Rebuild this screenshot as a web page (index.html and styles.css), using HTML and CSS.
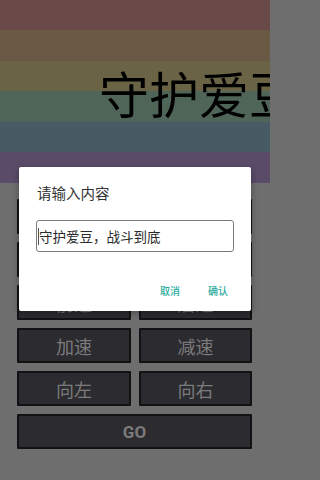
FILE: index.html
```html
<!DOCTYPE html>
<html lang="zh-CN">
<head>
<meta charset="utf-8">
<title>守护爱豆</title>
<link rel="stylesheet" href="styles.css">
</head>
<body>
<div class="app">
  <header class="banner">
    <div class="banner-title">守护爱豆</div>
  </header>
  <main class="pad">
    <button class="key">开始</button>
    <button class="key">暂停</button>
    <button class="key">上升</button>
    <button class="key">下降</button>
    <button class="key">前进</button>
    <button class="key">后退</button>
    <button class="key">加速</button>
    <button class="key">减速</button>
    <button class="key">向左</button>
    <button class="key">向右</button>
    <button class="key key-wide">GO</button>
  </main>
  <div class="dialog">
    <div class="dialog-title">请输入内容</div>
    <div class="dialog-input"><span class="caret"></span>守护爱豆，战斗到底</div>
    <div class="dialog-actions">
      <span class="action">取消</span>
      <span class="action">确认</span>
    </div>
  </div>
</div>
</body>
</html>
```
FILE: styles.css
```css
* { box-sizing: border-box; }
html, body { margin: 0; padding: 0; }
body {
  width: 270px;
  height: 480px;
  overflow: hidden;
  background: #6e6e6e;
  font-family: "Noto Sans CJK SC", "Noto Sans", sans-serif;
}
.app {
  position: relative;
  width: 270px;
  height: 480px;
  overflow: hidden;
  background: #6e6e6e;
}
.banner {
  height: 183px;
  display: flex;
  align-items: center;
  overflow: hidden;
  background: linear-gradient(to bottom,
    #694a48 0, #694a48 30px,
    #6a5945 30px, #6a5945 61px,
    #6a6345 61px, #6a6345 91px,
    #4e6557 91px, #4e6557 122px,
    #475b65 122px, #475b65 152px,
    #5a4c69 152px, #5a4c69 183px);
}
.banner-title {
  padding-left: 99px;
  white-space: nowrap;
  font-size: 50px;
  line-height: 60px;
  color: #000;
}
.pad {
  display: grid;
  grid-template-columns: 114px 113px;
  column-gap: 8px;
  row-gap: 8px;
  padding: 16px 0 0 17px;
}
.key {
  height: 35px;
  margin: 0;
  padding: 0;
  background: #2c2b30;
  border: 2px solid #121214;
  border-radius: 1px;
  color: #7b7b7b;
  font-family: "Noto Sans CJK SC", "Noto Sans", sans-serif;
  font-size: 18px;
  line-height: 30px;
}
.key-wide {
  grid-column: 1 / 3;
  font-family: Roboto, "Noto Sans", sans-serif;
  font-weight: 700;
  font-size: 17px;
}
.dialog {
  position: absolute;
  left: 19px;
  top: 167px;
  width: 232px;
  height: 144px;
  background: #fff;
  border-radius: 2px;
  box-shadow: 0 2px 6px rgba(0,0,0,0.35);
  padding-top: 16px;
}
.dialog-title {
  padding-left: 18px;
  font-size: 14.5px;
  line-height: 20px;
  color: #333;
}
.dialog-input {
  margin: 17px 17px 0 17px;
  height: 32px;
  border: 1px solid #7a7a7a;
  border-radius: 3px;
  display: flex;
  align-items: center;
  padding-left: 1px;
  font-size: 13.5px;
  color: #2a2a2a;
  white-space: nowrap;
}
.caret {
  display: inline-block;
  width: 1px;
  height: 17px;
  background: #555;
  margin-right: 0;
}
.dialog-actions {
  display: flex;
  justify-content: flex-end;
  gap: 28px;
  padding-right: 23px;
  margin-top: 29px;
}
.action {
  font-size: 10px;
  line-height: 20px;
  color: #2aab9d;
  font-weight: 500;
}
```
